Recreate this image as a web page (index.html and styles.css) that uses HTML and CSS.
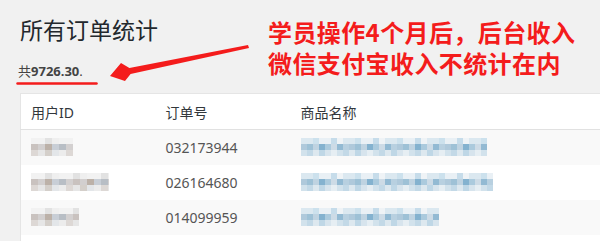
FILE: index.html
```html
<!DOCTYPE html>
<html lang="zh-CN">
  <head>
    <meta charset="UTF-8" />
    <title>所有订单统计</title>
    <link rel="stylesheet" href="styles.css">
  </head>
  <body>
    <div class="wrap">
      <h1>所有订单统计</h1>
      <p class="total">共<strong>9726.30</strong>.</p>

      <table class="orders">
        <thead>
          <tr>
            <th class="col-user">用户ID</th>
            <th class="col-no">订单号</th>
            <th>商品名称</th>
          </tr>
        </thead>
        <tbody>
          <tr class="alt">
            <td><span class="mosaic gray" style="width: 42px"></span></td>
            <td>032173944</td>
            <td><span class="mosaic blue" style="width: 186px"></span></td>
          </tr>
          <tr>
            <td><span class="mosaic gray" style="width: 78px"></span></td>
            <td>026164680</td>
            <td><span class="mosaic blue" style="width: 192px"></span></td>
          </tr>
          <tr class="alt">
            <td><span class="mosaic gray" style="width: 48px"></span></td>
            <td>014099959</td>
            <td><span class="mosaic blue" style="width: 138px"></span></td>
          </tr>
          <tr>
            <td></td>
            <td></td>
            <td></td>
          </tr>
        </tbody>
      </table>
    </div>

    <!-- annotation drawn over the screenshot -->
    <svg class="marks" width="600" height="100" viewBox="0 0 600 100">
      <line x1="17.5" y1="83.5" x2="96.5" y2="83.5" stroke="#f41c1c" stroke-width="2.5" stroke-linecap="round" />
      <polygon fill="#f41c1c" points="248,45 129.4,68 121,63 110,76 125,81 130.6,74 249,48" />
    </svg>
    <div class="note">
      <p>学员操作4个月后，后台收入</p>
      <p>微信支付宝收入不统计在内</p>
    </div>
  </body>
</html>
```

FILE: styles.css
```css
* {
  margin: 0;
  padding: 0;
  box-sizing: border-box;
}

body {
  font-family: 'Noto Sans', 'Noto Sans CJK SC', sans-serif;
  background: #f1f1f1;
  color: #444;
  font-size: 13px;
  position: relative;
  overflow: hidden;
  height: 241px;
}

.wrap {
  padding-left: 20px;
}

h1 {
  font-size: 23px;
  font-weight: 400;
  color: #23282d;
  line-height: 30px;
  padding-top: 15px;
}

.total {
  margin-top: 16px;
  margin-left: -2px;
  line-height: 20px;
  font-size: 13px;
}

.total strong {
  font-weight: 700;
}

.orders {
  margin-top: 12px;
  width: 600px;
  table-layout: fixed;
  border-collapse: collapse;
  background: #fff;
  border-left: 1px solid #e5e5e5;
  border-top: 1px solid #e5e5e5;
}

.orders th {
  text-align: left;
  font-weight: 400;
  font-size: 14px;
  color: #32373c;
  height: 36px;
  padding-left: 10px;
  border-bottom: 1px solid #e1e1e1;
}

.col-user {
  width: 135px;
}

.col-no {
  width: 135px;
}

.orders td {
  height: 35px;
  padding-left: 10px;
  font-size: 14px;
  color: #555;
  vertical-align: middle;
}

.orders tr.alt td {
  background: #f9f9f9;
}

.mosaic {
  display: block;
  height: 18px;
  background-repeat: no-repeat;
  background-size: 100% 6px;
  background-position: 0 0, 0 6px, 0 12px;
}

.mosaic.gray {
  background-image:
    repeating-linear-gradient(90deg, #f2f2f2 0 14px, #e2e2e2 14px 21px, #efefef 21px 28px),
    repeating-linear-gradient(90deg, #c9c2bf 0 7px, #d2cfcf 7px 14px, #bcb1a8 14px 21px, #c8ced6 21px 28px, #b8bec5 28px 35px, #d3d0d0 35px 42px),
    repeating-linear-gradient(90deg, #ddd8d5 0 7px, #e6e6e6 7px 14px, #d4cfca 14px 21px, #e3e6e9 21px 28px, #ececec 28px 35px);
}

.mosaic.blue {
  background-image:
    repeating-linear-gradient(90deg, #dbe8f0 0 12px, #cce1ed 12px 18px, #e9f0f5 18px 30px, #c6dcea 30px 36px, #eff3f6 36px 42px),
    repeating-linear-gradient(90deg, #afc9db 0 6px, #9ec1d6 6px 12px, #bfd3e1 12px 18px, #84b2cf 18px 24px, #abcadd 24px 30px, #cddbe6 30px 36px, #93bad3 36px 42px, #b8d0e0 42px 48px),
    repeating-linear-gradient(90deg, #d2e2ec 0 6px, #c3d9e7 6px 12px, #dde8ef 12px 18px, #bfd7e6 18px 24px, #d7e4ed 24px 30px, #e6eef3 30px 36px);
}

.marks {
  position: absolute;
  top: 0;
  left: 0;
}

.note {
  position: absolute;
  top: 16px;
  left: 268px;
  color: #f41c1c;
  font-family: 'Noto Sans CJK SC', sans-serif;
  font-size: 24px;
  font-weight: 700;
  line-height: 31px;
  letter-spacing: 0.4px;
  white-space: nowrap;
}
```
